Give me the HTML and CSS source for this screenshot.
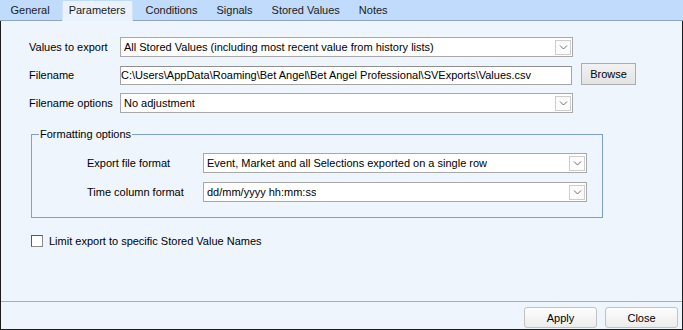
FILE: index.html
```html
<!DOCTYPE html>
<html>
<head>
<meta charset="utf-8">
<link rel="stylesheet" href="styles.css">
</head>
<body>
<div class="window">
  <div class="tabbar">
    <div class="tab">General</div>
    <div class="tab active">Parameters</div>
    <div class="tab">Conditions</div>
    <div class="tab">Signals</div>
    <div class="tab">Stored Values</div>
    <div class="tab">Notes</div>
  </div>
  <div class="panel">
    <div class="form">
      <div class="row">
        <div class="label">Values to export</div>
        <div class="combo wide">
          <span class="combo-text">All Stored Values (including most recent value from history lists)</span>
          <span class="arrow"><svg width="9" height="6" viewBox="0 0 9 6"><path d="M1 1.5 L4.5 5 L8 1.5" fill="none" stroke="#6d6d6d" stroke-width="1"/></svg></span>
        </div>
      </div>
      <div class="row">
        <div class="label">Filename</div>
        <div class="textbox">C:\Users\AppData\Roaming\Bet Angel\Bet Angel Professional\SVExports\Values.csv</div>
        <div class="btn browse">Browse</div>
      </div>
      <div class="row">
        <div class="label">Filename options</div>
        <div class="combo wide">
          <span class="combo-text">No adjustment</span>
          <span class="arrow"><svg width="9" height="6" viewBox="0 0 9 6"><path d="M1 1.5 L4.5 5 L8 1.5" fill="none" stroke="#6d6d6d" stroke-width="1"/></svg></span>
        </div>
      </div>
      <fieldset class="group">
        <legend>Formatting options</legend>
        <div class="group-body">
          <div class="row">
            <div class="label glabel">Export file format</div>
            <div class="combo narrow">
              <span class="combo-text">Event, Market and all Selections exported on a single row</span>
              <span class="arrow"><svg width="9" height="6" viewBox="0 0 9 6"><path d="M1 1.5 L4.5 5 L8 1.5" fill="none" stroke="#6d6d6d" stroke-width="1"/></svg></span>
            </div>
          </div>
          <div class="row">
            <div class="label glabel">Time column format</div>
            <div class="combo narrow">
              <span class="combo-text">dd/mm/yyyy hh:mm:ss</span>
              <span class="arrow"><svg width="9" height="6" viewBox="0 0 9 6"><path d="M1 1.5 L4.5 5 L8 1.5" fill="none" stroke="#6d6d6d" stroke-width="1"/></svg></span>
            </div>
          </div>
        </div>
      </fieldset>
      <div class="check-row">
        <span class="checkbox"></span>
        <span class="check-label">Limit export to specific Stored Value Names</span>
      </div>
    </div>
    <div class="footer">
      <div class="btn action">Apply</div>
      <div class="btn action">Close</div>
    </div>
  </div>
</div>
</body>
</html>
```
FILE: styles.css
```css
* { box-sizing: border-box; }
html, body {
  margin: 0;
  padding: 0;
  background: #eef5fd;
}
body {
  font-family: "Liberation Sans", Arial, sans-serif;
  font-size: 11px;
  color: #000;
}
.window {
  width: 683px;
  height: 330px;
  display: flex;
  flex-direction: column;
}
.tabbar {
  height: 21px;
  flex: 0 0 21px;
  background: #c0dbfb;
  border-bottom: 1px solid #8ea4c0;
  display: flex;
  align-items: flex-end;
  padding-left: 1px;
}
.tab {
  height: 20px;
  line-height: 20px;
  padding: 0 9.5px;
  color: #1a1a1a;
  white-space: nowrap;
}
.tab.active {
  background: #eaf3fd;
  padding: 0 6px;
  margin: 0 3.5px -1px 2.5px;
  height: 20px;
  line-height: 19px;
  border-left: 1px solid #d2e3f7;
  border-right: 1px solid #d2e3f7;
  position: relative;
}
.panel {
  flex: 1;
  display: flex;
  flex-direction: column;
  background: #eef5fd;
  border: 1px solid #1c1c1c;
  border-top: none;
}
.form {
  flex: 1;
  padding: 16px 0 0 28px;
  border-bottom: 1px solid #92b2d3;
}
.row {
  display: flex;
  align-items: center;
  height: 20px;
  margin-bottom: 8px;
}
.label {
  width: 91px;
  flex: 0 0 91px;
  white-space: nowrap;
}
.combo {
  height: 20px;
  background: #fff;
  border: 1px solid #a8a8a8;
  display: flex;
  align-items: center;
  justify-content: space-between;
  padding: 0 1px 0 3px;
}
.combo.wide { width: 453px; }
.combo.narrow { width: 384px; }
.combo-text {
  white-space: nowrap;
  overflow: hidden;
}
.arrow {
  width: 16px;
  height: 15px;
  border: 1px solid #cdcdcd;
  background: #fcfcfc;
  display: flex;
  align-items: center;
  justify-content: center;
}
.textbox {
  width: 452px;
  height: 19px;
  background: #fff;
  border: 1px solid #a5a5a5;
  border-top-color: #8f8f8f;
  line-height: 17px;
  padding-left: 0;
  white-space: nowrap;
  overflow: hidden;
}
.btn {
  display: flex;
  align-items: center;
  justify-content: center;
  white-space: nowrap;
}
.browse {
  width: 55px;
  height: 22px;
  margin-left: 9px;
  margin-top: -3px;
  background: linear-gradient(#f2f2f2, #e3e3e3);
  border: 1px solid #adadad;
}
.group {
  margin: 15px 0 0 2px;
  padding: 0;
  width: 572px;
  border: 1px solid #7c9fcb;
  min-width: 0;
}
.group legend {
  margin-left: 7px;
  padding: 0 1px;
  line-height: 13px;
}
.group-body {
  padding: 12px 0 9px 55px;
}
.group-body .row {
  margin-bottom: 9px;
}
.group-body .row:last-child {
  margin-bottom: 6px;
}
.glabel {
  width: 116px;
  flex: 0 0 116px;
}
.check-row {
  display: flex;
  align-items: center;
  margin: 16px 0 0 2px;
  height: 13px;
}
.checkbox {
  width: 12px;
  height: 12px;
  background: #fff;
  border: 1px solid #5a5a5a;
  border-right-color: #8a8a8a;
  border-bottom-color: #8a8a8a;
  margin-right: 6px;
}
.footer {
  height: 27px;
  flex: 0 0 27px;
  display: flex;
  justify-content: flex-end;
  align-items: flex-end;
  gap: 8px;
  padding: 0 4px 1px 0;
}
.action {
  width: 73px;
  height: 21px;
  border: 1px solid #c2c2c2;
  border-radius: 3px;
  background: linear-gradient(#fdfdfd, #ececec);
}
```
